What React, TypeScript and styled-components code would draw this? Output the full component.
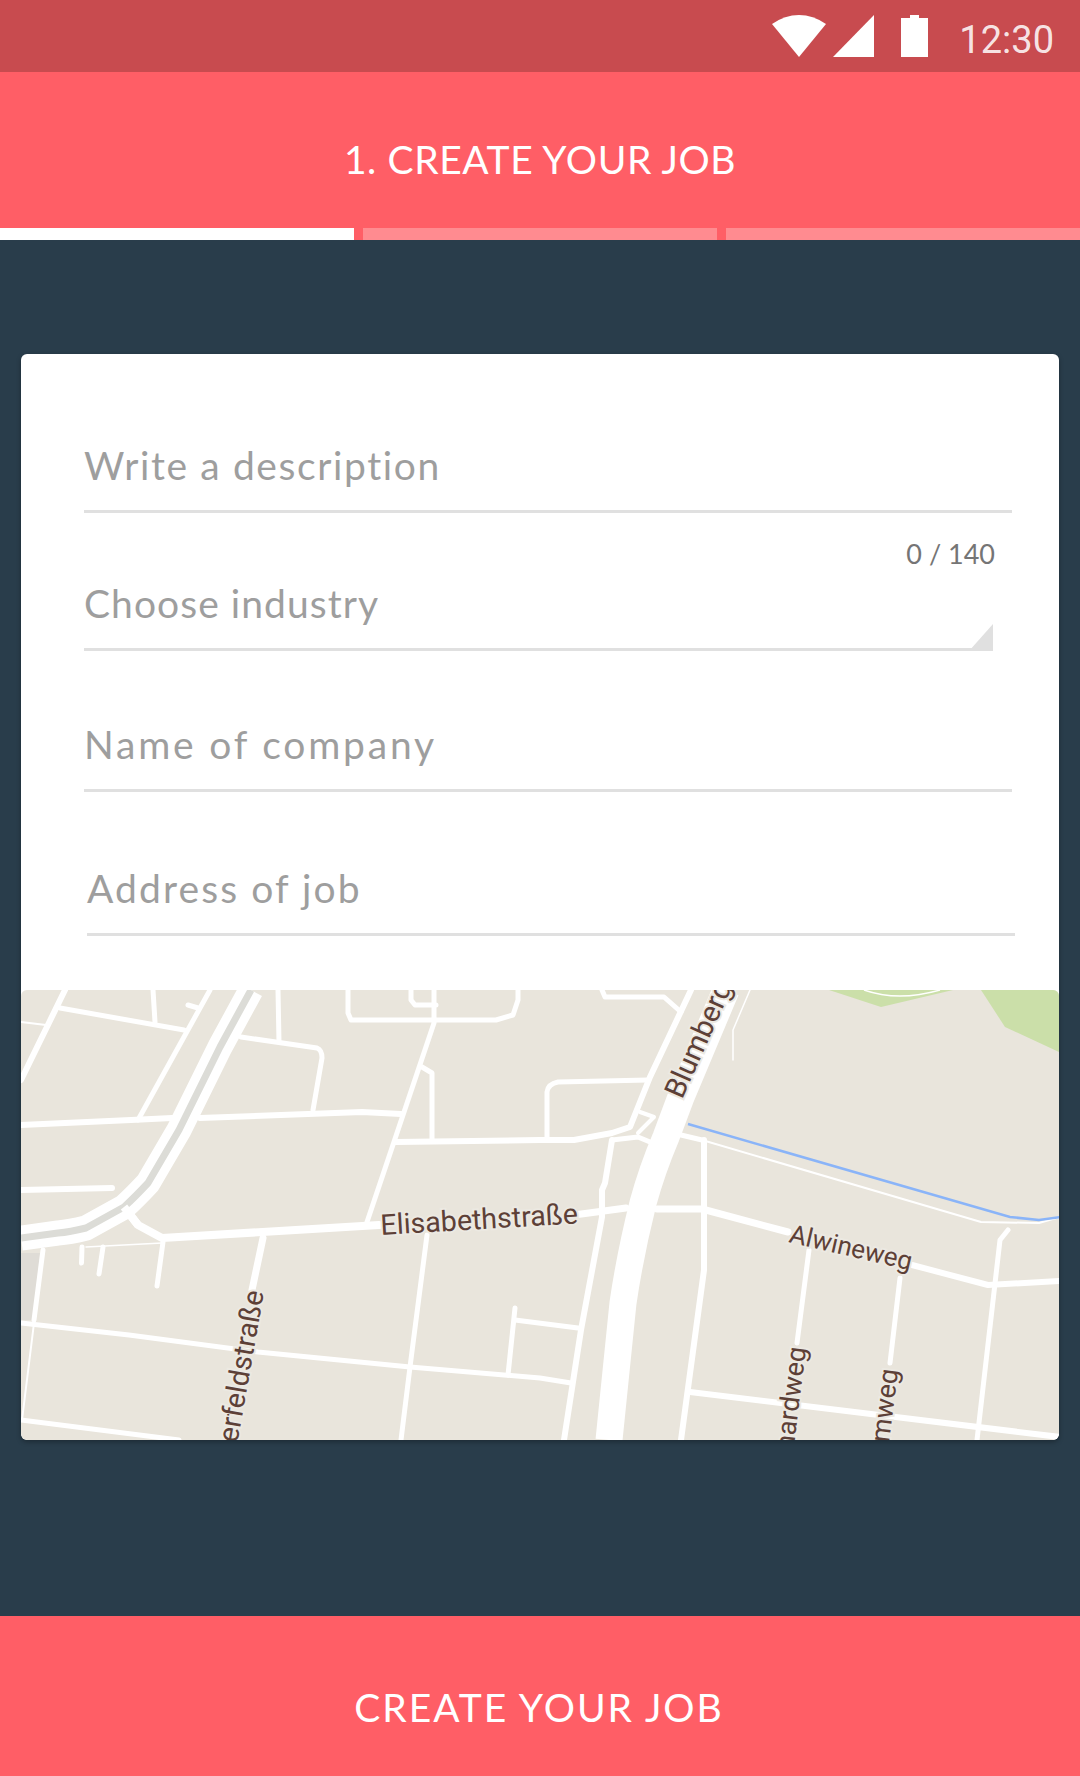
import React from "react";
import styled, { createGlobalStyle } from "styled-components";

const Global = createGlobalStyle`
  html, body { margin: 0; padding: 0; background: #293d4b; }
  body { font-family: Lato, "Open Sans", sans-serif; }
`;

const Screen = styled.div`
  width: 1080px;
  height: 1776px;
  display: flex;
  flex-direction: column;
  background: #293d4b;
  overflow: hidden;
`;

const StatusBar = styled.div`
  height: 72px;
  background: #c84b4f;
  display: flex;
  align-items: flex-start;
  justify-content: flex-end;
  padding: 15px 26px 0 0;
  box-sizing: border-box;
  color: #fff;
`;

const StatusIcon = styled.svg<{ $gap: number }>`
  display: block;
  margin-right: ${(p) => p.$gap}px;
  flex: none;
`;

const Clock = styled.div`
  font-family: Roboto, sans-serif;
  font-size: 38px;
  line-height: 42px;
  font-weight: 400;
  color: rgba(255, 255, 255, 0.87);
  margin-top: 4px;
`;

const Header = styled.div`
  height: 168px;
  background: #ff5e66;
  display: flex;
  flex-direction: column;
`;

const HeaderTitle = styled.div`
  flex: 1;
  display: flex;
  align-items: center;
  justify-content: center;
  color: #fff;
  font-size: 39px;
  letter-spacing: 0.6px;
  padding-top: 18px;
  box-sizing: border-box;
`;

const Tabs = styled.div`
  height: 12px;
  display: flex;
  gap: 9px;
`;

const Tab = styled.div<{ $active?: boolean }>`
  flex: 1;
  background: ${(p) => (p.$active ? "#ffffff" : "#ff8b90")};
`;

const Body = styled.div`
  flex: 1;
  padding: 114px 21px 0;
`;

const Card = styled.div`
  width: 1038px;
  height: 1086px;
  background: #fff;
  border-radius: 6px;
  box-shadow: 0 2px 5px rgba(0, 0, 0, 0.3);
  overflow: hidden;
  display: flex;
  flex-direction: column;
`;

const Form = styled.div`
  height: 636px;
  flex: none;
`;

const Field = styled.div<{ $height: number; $inset?: number; $width?: number; $tracking: number }>`
  height: ${(p) => p.$height}px;
  width: ${(p) => p.$width ?? 928}px;
  margin-left: ${(p) => p.$inset ?? 63}px;
  box-sizing: border-box;
  border-bottom: 3px solid #e0e0e0;
  position: relative;
  display: flex;
  align-items: flex-end;
  padding-bottom: 22px;
  color: #9e9e9e;
  font-size: 39px;
  line-height: 46px;
  letter-spacing: ${(p) => p.$tracking}px;
`;

const Counter = styled.div`
  height: 57px;
  padding: 26px 64px 0 0;
  box-sizing: border-box;
  text-align: right;
  font-size: 27px;
  line-height: 30px;
  color: #757575;
`;

const SelectArrow = styled.div`
  position: absolute;
  right: 0;
  bottom: -3px;
  width: 24px;
  height: 27px;
  background: #e0e0e0;
  clip-path: polygon(100% 0, 100% 100%, 0 100%);
`;

const MapBox = styled.div`
  flex: 1;
  background: #e9e5dc;
  border-radius: 6px;
  overflow: hidden;
`;

const MapSvg = styled.svg`
  display: block;
  width: 1038px;
  height: 450px;
`;

const MapLabel = styled.text<{ $size: number }>`
  font-family: Roboto, sans-serif;
  font-size: ${(p) => p.$size}px;
  fill: #5d4037;
  stroke: #ece9e2;
  stroke-width: 4px;
  paint-order: stroke;
`;

const Footer = styled.div`
  height: 160px;
  background: #ff5e66;
  display: flex;
  align-items: center;
  justify-content: center;
  color: #fff;
  font-size: 39px;
  letter-spacing: 2px;
  padding: 22px 2px 0 0;
  box-sizing: border-box;
`;

type Road = [number, string];

const roads: Road[] = [
  [6, "M65 990L21 1080"],
  [5, "M60 1008L184 1030"],
  [2, "M21 1022L46 1025"],
  [5, "M153 990L155 1022"],
  [5, "M188 1005L198 1008"],
  [5, "M210 990L138 1120"],
  [5, "M278 990L279 1042"],
  [5, "M241 1037L317 1048Q322 1050 322 1058L313 1110"],
  [6, "M21 1125L131 1120L172 1118"],
  [6, "M200 1118L362 1112L401 1114"],
  [5, "M434 990L434 1023L367 1222"],
  [5, "M348 990L348 1013L351 1020L496 1020L513 1015L518 1000L518 990"],
  [5, "M411 990L411 1000L415 1005L436 1005"],
  [5, "M422 1067L432 1073L432 1140"],
  [6, "M396 1142L540 1140L574 1140L612 1133L630 1127L650 1077L691 990"],
  [6, "M21 1190L112 1188"],
  [8, "M124 1207L138 1225L162 1238L379 1225"],
  [7, "M574 1215L626 1208"],
  [1.5, "M86 1247L162 1243"],
  [5, "M82 1247L81.5 1263"],
  [5, "M103 1247L99 1274"],
  [5, "M163 1242L157 1286"],
  [5, "M43 1250L34 1320"],
  [2, "M34 1323L22 1420"],
  [5, "M21 1323L129 1335L258 1352L410 1367L540 1378L571 1383"],
  [7, "M263 1238L252 1290"],
  [5, "M427 1235L410 1367L401 1440"],
  [5, "M515 1308L508 1375"],
  [5, "M515 1320L578 1328"],
  [5, "M21 1420L179 1440"],
  [5, "M547 1137L547 1092Q548 1084 558 1082L648 1080"],
  [5, "M602 990L605 997L664 997L681 1012"],
  [4, "M640 1112L654 1117L638 1133"],
  [6, "M612 1140L605 1183L602 1190L602 1217L581 1330L564 1440"],
  [5, "M612 1140L638 1137L650 1142"],
  [2, "M702 1140L981 1222L1039 1223L1060 1217"],
  [5, "M681 1135L702 1140"],
  [6, "M704 1140L704 1270L681 1440"],
  [7, "M657 1209L702 1209L788 1232"],
  [6, "M912 1265L988 1285L1060 1281"],
  [5, "M809 1250L797 1343"],
  [5, "M900 1278L890 1363"],
  [5, "M1008 1230L1000 1240L977 1440"],
  [6, "M690 1392L1060 1437"],
  [1.5, "M750 990L733 1030L733 1060"],
];

const highway =
  "M251 990L220 1047L179 1130L148 1183Q135 1197 124 1207L86 1228Q70 1232 58 1233L21 1238";

const StreetMap = () => (
  <MapSvg viewBox="21 990 1038 450">
    <polygon points="21,1253 40,1253 33,1320 21,1320" fill="#dfdcd6" />
    <polygon points="829,990 881,1007 953,990" fill="#cbdfa9" />
    <polygon points="981,990 1005,1027 1059,1052 1059,990" fill="#cbdfa9" />
    <path d="M864 990Q898 1002 940 990" fill="none" stroke="#fff" strokeWidth={1.5} />
    {roads.map(([w, d]) => (
      <path key={d} d={d} fill="none" stroke="#fff" strokeWidth={w} strokeLinecap="round" strokeLinejoin="round" />
    ))}
    <path d={highway} fill="none" stroke="#fff" strokeWidth={25} strokeLinejoin="round" />
    <path d={highway} fill="none" stroke="#dcdcd7" strokeWidth={7} strokeLinejoin="round" />
    <path d="M124 1207L138 1225" fill="none" stroke="#fff" strokeWidth={8} />
    <path
      d="M726 990L681 1097L666 1137Q652 1170 643 1203Q630 1255 623 1303L609 1440"
      fill="none"
      stroke="#fff"
      strokeWidth={27}
    />
    <path d="M688 1124L1010 1217L1039 1220L1060 1217" fill="none" stroke="#8ab4f8" strokeWidth={2.5} />
    <MapLabel $size={28.6} x={381} y={1235} transform="rotate(-3.4 381 1235)">Elisabethstraße</MapLabel>
    <MapLabel $size={29} x={682} y={1100} transform="rotate(-66 682 1100)">Blumberg</MapLabel>
    <MapLabel $size={26} x={788} y={1242} transform="rotate(13 788 1242)">Alwineweg</MapLabel>
    <MapLabel $size={28.6} x={264} y={1292} textAnchor="end" transform="rotate(-80 264 1292)">erfeldstraße</MapLabel>
    <MapLabel $size={27} x={806} y={1348} textAnchor="end" transform="rotate(-83 806 1348)">nardweg</MapLabel>
    <MapLabel $size={27} x={898} y={1370} textAnchor="end" transform="rotate(-83 898 1370)">mweg</MapLabel>
  </MapSvg>
);

export default function App() {
  return (
    <Screen>
      <Global />
      <StatusBar>
        <StatusIcon $gap={7} width={54} height={42} viewBox="0 0 54 42">
          <path d="M0 9Q13 0 27 0T54 9L27 42Z" fill="#fff" />
        </StatusIcon>
        <StatusIcon $gap={27} width={41} height={42} viewBox="0 0 41 42">
          <path d="M0 42L41 0V42Z" fill="#fff" />
        </StatusIcon>
        <StatusIcon $gap={31} width={27} height={42} viewBox="0 0 27 42">
          <path d="M9 0H18V3H27V42H0V3H9Z" fill="#fff" />
        </StatusIcon>
        <Clock>12:30</Clock>
      </StatusBar>
      <Header>
        <HeaderTitle>1. CREATE YOUR JOB</HeaderTitle>
        <Tabs>
          <Tab $active />
          <Tab />
          <Tab />
        </Tabs>
      </Header>
      <Body>
        <Card>
          <Form>
            <Field $height={159} $tracking={1.6}>Write a description</Field>
            <Counter>0 / 140</Counter>
            <Field $height={81} $width={909} $tracking={1.05}>
              Choose industry
              <SelectArrow />
            </Field>
            <Field $height={141} $tracking={2.8}>Name of company</Field>
            <Field $height={144} $inset={66} $tracking={2.1}>Address of job</Field>
          </Form>
          <MapBox>
            <StreetMap />
          </MapBox>
        </Card>
      </Body>
      <Footer>CREATE YOUR JOB</Footer>
    </Screen>
  );
}
